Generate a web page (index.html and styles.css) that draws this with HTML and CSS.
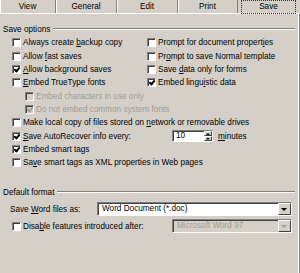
FILE: index.html
```html
<!DOCTYPE html>
<html lang="en">
<head>
  <meta charset="UTF-8">
  <title>Options - Save</title>
  <link rel="stylesheet" href="styles.css">
</head>
<body>
  <div class="dialog">
    <div class="tabs">
      <div class="tab">View</div>
      <div class="tab">General</div>
      <div class="tab">Edit</div>
      <div class="tab">Print</div>
      <div class="tab active"><span class="focus">Save</span></div>
    </div>

    <div class="panel">
      <div class="legend"><span>Save options</span></div>
      <div class="opts">
        <label class="opt"><span class="box"></span><span>Always create <u>b</u>ackup copy</span></label>
        <label class="opt"><span class="box"></span><span>Prompt for document propert<u>i</u>es</span></label>
        <label class="opt"><span class="box"></span><span>Allow <u>f</u>ast saves</span></label>
        <label class="opt"><span class="box"></span><span>Pr<u>o</u>mpt to save Normal template</span></label>
        <label class="opt"><span class="box checked"></span><span><u>A</u>llow background saves</span></label>
        <label class="opt"><span class="box"></span><span>Save <u>d</u>ata only for forms</span></label>
        <label class="opt"><span class="box"></span><span><u>E</u>mbed TrueType fonts</span></label>
        <label class="opt"><span class="box checked"></span><span>Embed lingu<u>i</u>stic data</span></label>
        <label class="opt wide sub disabled"><span class="box"></span><span>Embed characters in use only</span></label>
        <label class="opt wide sub disabled"><span class="box checked"></span><span>Do not embed common system fonts</span></label>
        <label class="opt wide"><span class="box"></span><span>Make local copy of files stored on <u>n</u>etwork or removable drives</span></label>
        <div class="opt wide">
          <span class="box checked"></span><span class="auto-label"><u>S</u>ave AutoRecover info every:</span>
          <span class="spin"><span class="spin-val">10</span><span class="spin-btns"><span class="up"></span><span class="down"></span></span></span>
          <span class="unit"><u>m</u>inutes</span>
        </div>
        <label class="opt wide"><span class="box checked"></span><span>Embed smart tags</span></label>
        <label class="opt wide"><span class="box"></span><span>Sa<u>v</u>e smart tags as XML properties in Web pages</span></label>
      </div>

      <div class="legend second"><span>Default format</span></div>
      <div class="format-row">
        <span class="field-label">Save <u>W</u>ord files as:</span>
        <div class="combo"><span class="combo-text">Word Document (*.doc)</span><span class="combo-btn"></span></div>
      </div>
      <div class="format-row">
        <span class="field-label check-label"><span class="box"></span><span>Disa<u>b</u>le features introduced after:</span></span>
        <div class="combo disabled"><span class="combo-text">Microsoft Word 97</span><span class="combo-btn"></span></div>
      </div>
    </div>
  </div>
</body>
</html>
```

FILE: styles.css
```css
body {
  margin: 0;
  background: #d4d0c8;
  font-family: "Liberation Sans", Arial, sans-serif;
  font-size: 8.2px;
  color: #000;
}
u {
  text-decoration: underline;
  text-underline-offset: 1px;
}
.dialog {
  width: 300px;
  height: 273px;
  overflow: hidden;
}

/* tabs */
.tabs {
  display: flex;
  height: 14px;
  border-bottom: 1px solid #fff;
  box-sizing: border-box;
}
.tab {
  width: 60px;
  text-align: center;
  line-height: 13px;
  border-right: 1px solid #808080;
  box-shadow: inset 1px 0 #fff;
}
.tab:nth-child(1) { width: 56px; }
.tab:nth-child(2) { width: 61px; }
.tab:nth-child(3) { width: 61px; }
.tab.active {
  width: 60px;
  border-right: none;
  box-shadow: none;
  padding-left: 3px;
}
.focus {
  display: block;
  width: 55px;
  height: 14px;
  box-sizing: border-box;
  border: 1px dotted #333;
  line-height: 12px;
}

/* panel */
.panel {
  border-right: 1px solid #808080;
  box-shadow: inset -1px 0 #fff;
  height: 259px;
  box-sizing: border-box;
  padding: 9px 4px 0 3px;
}
.legend {
  display: flex;
  align-items: center;
  height: 12px;
  margin-bottom: 1px;
}
.legend::after {
  content: "";
  flex: 1;
  margin-left: 3px;
  border-top: 1px solid #808080;
  border-bottom: 1px solid #fff;
}
.legend.second {
  margin-top: 17px;
  margin-bottom: 4px;
}

.opts {
  display: grid;
  grid-template-columns: 135px 1fr;
  grid-auto-rows: 13.35px;
  padding-left: 9px;
}
.opt {
  display: flex;
  align-items: center;
  white-space: nowrap;
}
.opt.wide { grid-column: 1 / 3; }
.opt.sub { padding-left: 13px; }
.opt.disabled { color: #a09d96; }

.box {
  width: 9px;
  height: 9px;
  box-sizing: border-box;
  flex: none;
  margin-right: 2px;
  background: #fff;
  border: 1px solid;
  border-color: #808080 #fff #fff #808080;
  box-shadow: inset 1px 1px #404040;
  position: relative;
}
.box.checked::after {
  content: "";
  position: absolute;
  left: 1px;
  top: 0px;
  width: 2px;
  height: 4px;
  border: solid #000;
  border-width: 0 2px 2px 0;
  transform: translate(1px, 0) rotate(40deg);
}
.disabled .box { background: #d4d0c8; }
.disabled .box.checked::after { border-color: #a09d96; }

.auto-label {
  flex: none;
  width: 149px;
}
.spin {
  display: flex;
  flex: none;
  width: 41px;
  height: 12px;
  box-sizing: border-box;
  background: #fff;
  border: 1px solid;
  border-color: #808080 #fff #fff #808080;
  box-shadow: inset 1px 1px #404040;
  margin-right: 5px;
}
.spin-val {
  flex: 1;
  padding-left: 3px;
  line-height: 10px;
}
.spin-btns {
  width: 8px;
  display: flex;
  flex-direction: column;
}
.spin-btns span {
  flex: 1;
  background: #d4d0c8;
  border: 1px solid;
  border-color: #fff #404040 #404040 #fff;
  position: relative;
}
.spin-btns .up::after,
.spin-btns .down::after {
  content: "";
  position: absolute;
  left: 1px;
  border-left: 2px solid transparent;
  border-right: 2px solid transparent;
}
.spin-btns .up::after { top: 1px; border-bottom: 2px solid #000; }
.spin-btns .down::after { top: 1px; border-top: 2px solid #000; }

/* default format */
.format-row {
  display: flex;
  align-items: center;
  height: 14px;
  margin-bottom: 3px;
}
.field-label {
  flex: none;
  width: 87px;
  padding-left: 7px;
  white-space: nowrap;
}
.check-label {
  display: flex;
  align-items: center;
  padding-left: 9px;
  width: 160px;
}
.combo {
  display: flex;
  flex: none;
  width: 195px;
  height: 14px;
  box-sizing: border-box;
  background: #fff;
  border: 1px solid;
  border-color: #808080 #fff #fff #808080;
  box-shadow: inset 1px 1px #404040;
}
.combo-text {
  flex: 1;
  padding-left: 4px;
  line-height: 12px;
}
.combo-btn {
  width: 11px;
  background: #d4d0c8;
  border: 1px solid;
  border-color: #fff #404040 #404040 #fff;
  position: relative;
}
.combo-btn::after {
  content: "";
  position: absolute;
  left: 2px;
  top: 4px;
  border-left: 3px solid transparent;
  border-right: 3px solid transparent;
  border-top: 3px solid #000;
}
.combo.disabled {
  width: 120px;
  background: #d4d0c8;
}
.combo.disabled .combo-text { color: #a09d96; }
.combo.disabled .combo-btn::after { border-top-color: #a09d96; }
```
